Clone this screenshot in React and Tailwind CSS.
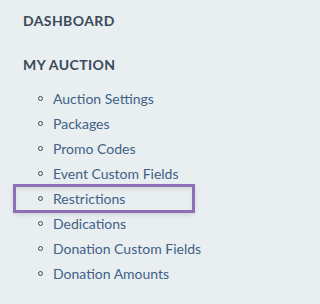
export default function App() {
  const items = [
    "Auction Settings",
    "Packages",
    "Promo Codes",
    "Event Custom Fields",
    "Restrictions",
    "Dedications",
    "Donation Custom Fields",
    "Donation Amounts",
  ];
  return (
    <div className="w-full min-h-[304px] bg-[#e9eef0] overflow-hidden" style={{ fontFamily: "Lato, 'Open Sans', sans-serif" }}>
      <div className="pt-[14px] pl-[23px] text-[14px] font-bold text-[#3b4a5a] tracking-[0.4px] leading-[14px]">DASHBOARD</div>
      <div className="pt-[30px] pl-[23px] text-[14px] font-bold text-[#3b4a5a] tracking-[0.4px] leading-[14px]">MY AUCTION</div>
      <ul className="mt-[14px] flex flex-col">
        {items.map((t) => {
          const active = t === "Restrictions";
          return (
            <li key={t} className="h-[25px] flex items-center">
              <div
                className={
                  active
                    ? "ml-[13px] w-[182px] h-[29px] shrink-0 border-[3px] border-[#8d6fb5] flex items-center pl-[22px] shadow-[inset_0_3px_4px_rgba(0,0,0,0.08),0_2px_4px_rgba(0,0,0,0.1)]"
                    : "ml-[13px] w-[182px] h-[29px] shrink-0 flex items-center pl-[22px] border-[3px] border-transparent"
                }
              >
                <span className="w-[5px] h-[5px] rounded-full border-[1.5px] border-[#3f4a55] shrink-0"></span>
                <span className="ml-[10px] text-[14px] text-[#3e6287] whitespace-nowrap">{t}</span>
              </div>
            </li>
          );
        })}
      </ul>
    </div>
  );
}
